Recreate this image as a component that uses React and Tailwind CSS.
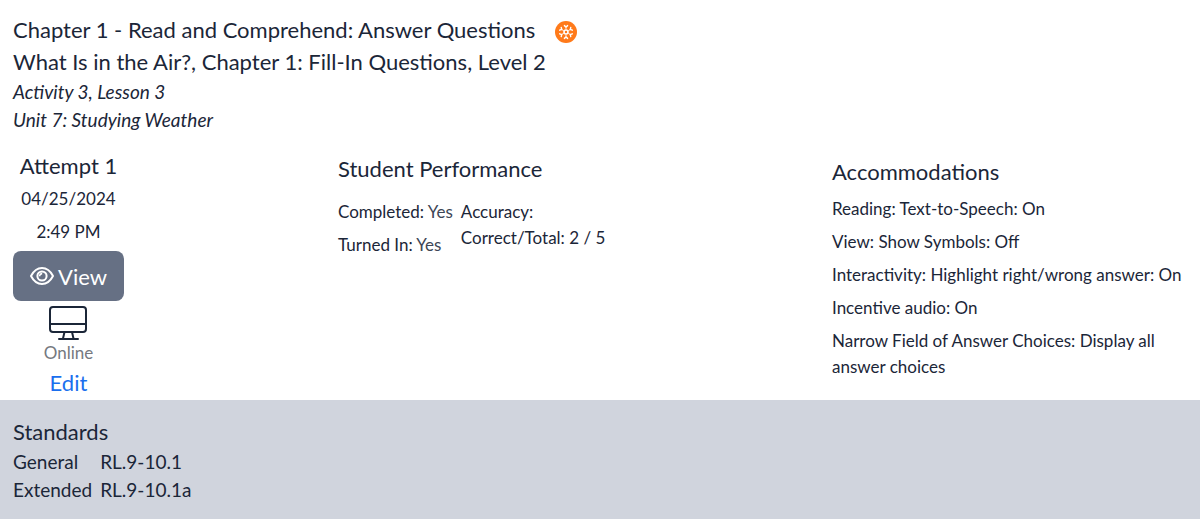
import React from "react";

const accommodations = [
  "Reading: Text-to-Speech: On",
  "View: Show Symbols: Off",
  "Interactivity: Highlight right/wrong answer: On",
  "Incentive audio: On",
  "Narrow Field of Answer Choices: Display all answer choices",
];

const standards = [
  { label: "General", code: "RL.9-10.1" },
  { label: "Extended", code: "RL.9-10.1a" },
];

const spokes = [0, 60, 120, 180, 240, 300];

const UnitBadge = () => (
  <svg viewBox="0 0 22 22" className="size-[22px]" role="img" aria-label="Unit">
    <circle cx="11" cy="11" r="11" fill="#ff7a1a" />
    <circle cx="11" cy="11" r="2" fill="none" stroke="#fff" strokeWidth="1.6" />
    {spokes.map((angle) => (
      <g
        key={angle}
        transform={`rotate(${angle} 11 11)`}
        fill="none"
        stroke="#fff"
        strokeLinecap="round"
      >
        <path d="M11 8V6.6" strokeWidth="0.8" />
        <path d="M9.4 4.600L11 6L12.600 4.600" strokeWidth="1.400" />
      </g>
    ))}
  </svg>
);

const EyeIcon = () => (
  <svg
    viewBox="0 0 24 20"
    className="h-5 w-6"
    fill="none"
    stroke="currentColor"
    strokeWidth="2"
    strokeLinejoin="round"
    aria-hidden="true"
  >
    <path d="M1 10C3.6 5 7.400 2 12 2s8.400 3 11 8c-2.600 5-6.400 8-11 8S3.600 15 1 10Z" />
    <circle cx="12" cy="10" r="4.600" />
    <path d="M9.600 10.200A2.500 2.500 0 0 1 12.200 7.600" strokeWidth="1.600" />
  </svg>
);

const MonitorIcon = () => (
  <svg
    viewBox="0 0 40 36"
    className="h-9 w-10"
    fill="none"
    stroke="currentColor"
    strokeWidth="2"
    strokeLinecap="round"
    strokeLinejoin="round"
    aria-hidden="true"
  >
    <rect x="2" y="2" width="36" height="25" rx="3" />
    <path d="M2 19H38M16.500 27L15 33.500M24 27L25.500 33.500M11 34H30" />
  </svg>
);

const App = () => {
  return (
    <main className="bg-white font-[Lato,sans-serif] text-[#1b2638]">
      <header className="px-[13px] pt-[14px]">
        <div className="flex items-end gap-5">
          <h1 className="text-[22px] leading-8">
            Chapter 1 - Read and Comprehend: Answer Questions
          </h1>
          <div className="pb-[3px]">
            <UnitBadge />
          </div>
        </div>
        <h2 className="text-[22px] leading-8">
          What Is in the Air?, Chapter 1: Fill-In Questions, Level 2
        </h2>
        <p className="text-[19px] leading-7 italic">Activity 3, Lesson 3</p>
        <p className="text-[19px] leading-7 italic">Unit 7: Studying Weather</p>
      </header>

      <div className="grid grid-cols-[325fr_494fr_355fr] px-[13px] pt-4">
        <section className="flex w-fit flex-col items-center">
          <h3 className="text-[22px] leading-8">Attempt 1</h3>
          <p className="text-[17px] leading-[33px]">04/25/2024</p>
          <p className="text-[17px] leading-[33px]">2:49 PM</p>
          <button
            type="button"
            className="mt-[3px] flex h-[50px] items-center gap-1 rounded-lg bg-[#667084] px-[17px] text-[22px] text-white"
          >
            <EyeIcon />
            View
          </button>
          <div className="mt-1 flex flex-col items-center">
            <MonitorIcon />
            <span className="text-[17px] leading-6 text-[#75797f]">Online</span>
          </div>
          <a href="#edit" className="text-[22px] leading-[35px] text-[#1a6fee]">
            Edit
          </a>
        </section>

        <section className="pt-[3px]">
          <h3 className="text-[22px] leading-8">Student Performance</h3>
          <div className="flex gap-2 pt-[14px] text-[17px] leading-[26px]">
            <div className="space-y-[7px]">
              <p>
                Completed: <span className="text-[#3d4656]">Yes</span>
              </p>
              <p>
                Turned In: <span className="text-[#3d4656]">Yes</span>
              </p>
            </div>
            <div>
              <p>Accuracy:</p>
              <p>Correct/Total: 2 / 5</p>
            </div>
          </div>
        </section>

        <section className="pt-[6px]">
          <h3 className="text-[22px] leading-8">Accommodations</h3>
          <ul className="space-y-[7px] pt-2 text-[17px] leading-[26px]">
            {accommodations.map((item) => (
              <li key={item}>{item}</li>
            ))}
          </ul>
        </section>
      </div>

      <section className="bg-[#d0d4dd] px-[13px] pt-4 pb-[15px]">
        <h3 className="text-[22px] leading-8">Standards</h3>
        <table className="text-[19px] leading-7">
          <tbody>
            {standards.map((item) => (
              <tr key={item.label}>
                <th scope="row" className="pr-2 text-left font-normal">
                  {item.label}
                </th>
                <td>{item.code}</td>
              </tr>
            ))}
          </tbody>
        </table>
      </section>
    </main>
  );
};

export default App;
